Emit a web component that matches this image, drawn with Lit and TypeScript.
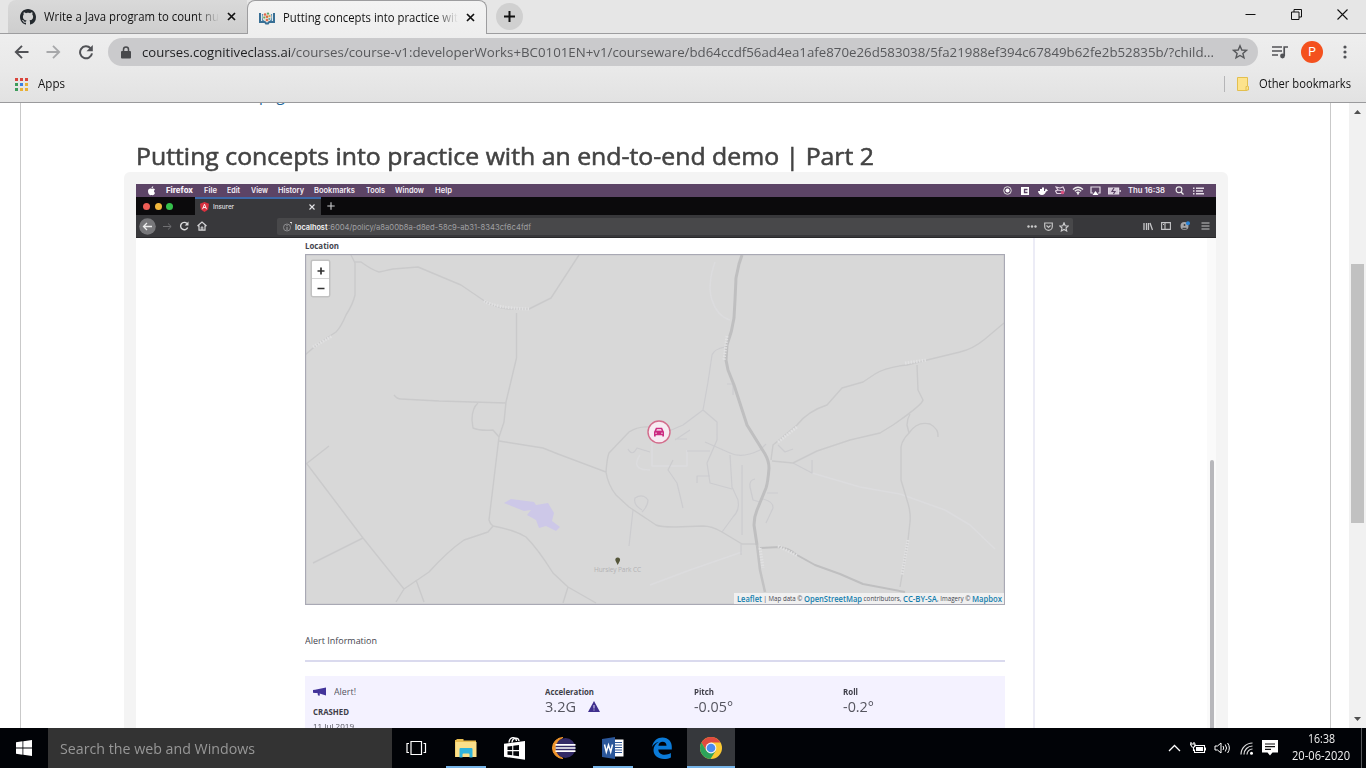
import { LitElement, html, css, svg } from "lit";
import { customElement, property } from "lit/decorators.js";

/** Text scaled horizontally to a given width, so labels keep their measure in any font. */
@customElement("fit-text")
class FitText extends LitElement {
  @property({ type: Number }) w = 0;
  static styles = css`
    :host { display: inline-block; flex: none; white-space: pre; }
    .t { display: inline-block; transform-origin: 0 50%; }
  `;
  render() {
    return html`<span class="t"><slot></slot></span>`;
  }
  firstUpdated() {
    const t = this.renderRoot.querySelector(".t") as HTMLElement;
    const natural = t.getBoundingClientRect().width;
    this.style.width = `${this.w}px`;
    if (natural > 0) t.style.transform = `scaleX(${this.w / natural})`;
  }
}

const closeX = html`<svg class="cx" width="9" height="9" viewBox="0 0 9 9"><path d="M1 1l7 7M8 1l-7 7" stroke="#111" stroke-width="1.700" fill="none"/></svg>`;

@customElement("browser-top")
class BrowserTop extends LitElement {
  static styles = css`
    :host { display: block; font: 12px/16px "Open Sans", sans-serif; color: #111; }
    svg { display: block; flex: none; }
    .strip { background: #e6e6e6; border-bottom: 1px solid #9d9d9f; display: flex; box-sizing: border-box; height: 34px; padding-left: 8px; }
    .tab { box-sizing: border-box; height: 33px; display: flex; align-items: center; padding-left: 12px; }
    .tab .gh { margin-right: 8px; }
    .tab .cc { margin-right: 8px; }
    .old { width: 239px; background: linear-gradient(#d9d9d9, #cecece); border-radius: 8px 0 0 0; }
    .cur { width: 240px; height: 34px; background: linear-gradient(#f3f3f3, #eeeeee); border: 1px solid #9d9d9f; border-bottom: 0; border-radius: 8px 8px 0 0; padding-left: 11px; }
    .fade { display: flex; -webkit-mask-image: linear-gradient(90deg, #000 87%, transparent 100%); mask-image: linear-gradient(90deg, #000 87%, transparent 100%); }
    .cx { margin-left: 8px; }
    .plus { width: 27px; height: 27px; border-radius: 50%; background: #d0d0d0; margin: 3px 0 0 9px; display: flex; align-items: center; justify-content: center; }
    .wins { margin-left: auto; display: flex; padding-top: 9px; padding-right: 18px; gap: 35px; }
    .bar { height: 36px; background: linear-gradient(#eeeeee, #e9e9e9); display: flex; align-items: center; padding-left: 14px; }
    .nav { display: flex; gap: 15px; margin-right: 12px; }
    .omni { width: 1150px; box-sizing: border-box; height: 28px; border-radius: 14px; background: #cacacc; display: flex; align-items: center; padding: 0 10px 0 13px; font-size: 13.4px; line-height: 18px; color: #57585b; }
    .omni .lock { margin-right: 11px; }
    .dom { color: #1d1e20; }
    .omni .star { margin-left: auto; }
    .av { width: 22px; height: 22px; border-radius: 50%; background: #f4511e; color: #fff; font: 12px/22px Roboto, sans-serif; text-align: center; margin: 0 20px 0 12px; }
    .media { margin-left: 14px; }
    .marks { background: linear-gradient(#e9e9e9, #e2e2e2); border-bottom: 1px solid #9a9a9c; display: flex; align-items: center; padding: 0 15px 4px 15px; box-sizing: border-box; height: 33px; }
    .marks .apps { margin-right: 10px; }
    .div { width: 1px; height: 16px; background: #b5b5b7; margin-left: auto; margin-right: 12px; }
    .fold { margin-right: 10px; }
  `;
  render() {
    return html`
      <div class="strip">
        <div class="tab old">
          <svg class="gh" width="16" height="16" viewBox="0 0 16 16"><path fill="#24292e" d="M8 0C3.58 0 0 3.58 0 8c0 3.54 2.29 6.53 5.47 7.59.4.07.55-.17.55-.38 0-.19-.01-.82-.01-1.49-2.01.37-2.53-.49-2.69-.94-.09-.23-.48-.94-.82-1.13-.28-.15-.68-.52-.01-.53.63-.01 1.08.58 1.23.82.72 1.21 1.87.87 2.33.66.07-.52.28-.87.51-1.07-1.78-.2-3.64-.89-3.64-3.95 0-.87.31-1.59.82-2.15-.08-.2-.36-1.02.08-2.12 0 0 .67-.21 2.2.82.64-.18 1.32-.27 2-.27s1.36.09 2 .27c1.53-1.04 2.2-.82 2.2-.82.44 1.1.16 1.92.08 2.12.51.56.82 1.27.82 2.15 0 3.07-1.87 3.75-3.65 3.95.29.25.54.73.54 1.48 0 1.07-.01 1.93-.01 2.2 0 .21.15.46.55.38A8.01 8.01 0 0016 8c0-4.42-3.58-8-8-8z"/></svg>
          <span class="fade"><fit-text w="175">Write a Java program to count nu</fit-text></span>
          ${closeX}
        </div>
        <div class="tab cur">
          <svg class="cc" width="16" height="14" viewBox="0 0 16 14"><path d="M1 2v9h5l1 1.500h2l1-1.500h5V2" fill="none" stroke="#386f95" stroke-width="2"/><path d="M3.500 3v6.500H6" fill="none" stroke="#5a93b5" stroke-width="1.200"/><path d="M12.500 3v6.500H10" fill="none" stroke="#5a93b5" stroke-width="1.200"/><circle cx="8" cy="6" r="4.500" fill="#e4e0d8"/><circle cx="6" cy="3.500" r="1.200" fill="#e2664a"/><circle cx="9" cy="2.600" r="1.100" fill="#5aa66a"/><circle cx="10.500" cy="5" r="1.100" fill="#e0a040"/><circle cx="5.300" cy="6.500" r="1.100" fill="#65ab5e"/><circle cx="8" cy="5.700" r="1.300" fill="#d96c3f"/><circle cx="8" cy="9" r="1.300" fill="#df6f50"/><circle cx="10.300" cy="8" r="1" fill="#5aa6a0"/></svg>
          <span class="fade"><fit-text w="175">Putting concepts into practice wit</fit-text></span>
          ${closeX}
        </div>
        <div class="plus"><svg width="13" height="13" viewBox="0 0 13 13"><path d="M6.500 1v11M1 6.500h11" stroke="#111" stroke-width="2"/></svg></div>
        <div class="wins">
          <svg width="11" height="11" viewBox="0 0 11 11"><path d="M.500 5.500h10" stroke="#111"/></svg>
          <svg width="11" height="11" viewBox="0 0 11 11"><path d="M.500 3h7.500v7.500H.500zM3 3V.500h7.500V8H8" fill="none" stroke="#111"/></svg>
          <svg width="11" height="11" viewBox="0 0 11 11"><path d="M.500.500l10 10M10.500.500l-10 10" stroke="#111" stroke-width="1.100"/></svg>
        </div>
      </div>
      <div class="bar">
        <div class="nav">
          <svg width="16" height="16" viewBox="0 0 16 16"><path d="M14.500 8H2M8 1.800L1.800 8 8 14.200" fill="none" stroke="#515256" stroke-width="1.900"/></svg>
          <svg width="16" height="16" viewBox="0 0 16 16"><path d="M1.500 8H14M8 1.800L14.200 8 8 14.200" fill="none" stroke="#a7a8aa" stroke-width="1.800"/></svg>
          <svg width="20" height="16" viewBox="0 0 20 16"><path d="M14.500 4.200A6 6 0 1 0 16 9.300" fill="none" stroke="#515256" stroke-width="2"/><path d="M16.800 1v6.300h-6.300z" fill="#515256"/></svg>
        </div>
        <div class="omni">
          <svg class="lock" width="10" height="13" viewBox="0 0 10 13"><path d="M1 5h8a1 1 0 011 1v5.500a1 1 0 01-1 1H1a1 1 0 01-1-1V6a1 1 0 011-1z" fill="#48494c"/><path d="M2.500 5V3.400a2.500 2.500 0 015 0V5" fill="none" stroke="#48494c" stroke-width="1.500"/></svg>
          <fit-text class="dom" w="149">courses.cognitiveclass.ai</fit-text><fit-text w="923">/courses/course-v1:developerWorks+BC0101EN+v1/courseware/bd64ccdf56ad4ea1afe870e26d583038/5fa21988ef394c67849b62fe2b52835b/?child...</fit-text>
          <svg class="star" width="16" height="16" viewBox="0 0 16 16"><path d="M8 1.800l1.800 4.200 4.600.4-3.500 3 1.100 4.500L8 11.500l-4 2.400 1.100-4.500-3.500-3 4.600-.4z" fill="none" stroke="#57585b" stroke-width="1.400"/></svg>
        </div>
        <svg class="media" width="17" height="14" viewBox="0 0 17 14"><path d="M0 2h10M0 6h10M0 10h6" stroke="#515256" stroke-width="1.700"/><circle cx="10.500" cy="11" r="2.400" fill="#515256"/><path d="M12.200 11V2H16" fill="none" stroke="#515256" stroke-width="1.700"/></svg>
        <div class="av">P</div>
        <svg width="4" height="14" viewBox="0 0 4 14" fill="#515256"><circle cx="2" cy="2" r="1.600"/><circle cx="2" cy="7" r="1.600"/><circle cx="2" cy="12" r="1.600"/></svg>
      </div>
      <div class="marks">
        <svg class="apps" width="13" height="13" viewBox="0 0 13 13"><path d="M0 0h3v3H0zM5 0h3v3H5zM10 0h3v3h-3z" fill="#d9453c"/><path d="M0 5h3v3H0zM0 10h3v3H0z" fill="#3d9c5b"/><path d="M5 5h3v3H5z" fill="#3c7fe0"/><path d="M10 5h3v3h-3zM5 10h3v3H5zM10 10h3v3h-3z" fill="#e9b035"/></svg>
        <fit-text w="27">Apps</fit-text>
        <div class="div"></div>
        <svg class="fold" width="12" height="14" viewBox="0 0 12 14"><path d="M.500.500h10V9l1 .500v3.500h-1.500v.500H.500z" fill="#fde38c" stroke="#e3bf4e"/><path d="M9 13V9.500h1.500" stroke="#e3bf4e" fill="none"/></svg>
        <fit-text w="92">Other bookmarks</fit-text>
      </div>`;
  }
}

const thin = [
  "M351 255L355 263V295Q353 304 346 315 341 327 336 332L319 343 305 355",
  "M355 262H361Q372 270 379 272 384 271 393 269L418 267 461 285 486 302Q495 308 509 309H529L551 298 579 255",
  "M516.500 313V358L506 402 504 422 499 437 489 520Q490 524 493 526",
  "M394 395Q397 399 401 399L439 401 506 403",
  "M478 403Q472 408 472 420L473 428Q480 431 493 430L499 437",
  "M499 441L543 448 558 454 606 472Q608 485 616 495L629 507 656 525Q660 527 675 527L703 526Q712 526 722 532L742 544H757",
  "M606 472Q607 458 609 453L629 432Q638 426 650 427",
  "M493 526L488 532 464 540Q448 551 429 572L404 589 396 602",
  "M493 526Q515 530 526 537 538 549 553 573L568 587 596 603M568 587L563 603",
  "M307 464L363 538 404 589M329 446L306 464M363 538L313 563M416 580L424 602",
  "M1004 323L985 339Q973 349 960 352L927 360 907 365Q886 367 875 374L863 382 842 388 827 405Q808 411 797 425L773 445 771 460",
  "M917 365L918 390 923 400Q922 405 893 425L880 433 850 440 817 451 793 463 772 461",
  "M910 414Q907 419 907 425L909 433Q902 440 901 447V480L907 500Q911 512 910 522L908 540 900 587",
  "M909 433Q917 421 930 424 939 429 938 437",
];
const faint = [
  "M725 347Q714 349 712 355L708 382 703 410 683 425 662 434M703 410L717 422 717 440 707 463 710 483 732 489",
  "M705 442L730 453Q742 459 760 450L766 444M730 455L732 487 738 500Q740 510 733 517L722 532",
  "M687 451H710M697 483V476H710M673 460L668 470 677 483 683 508M675 440L690 430 M675 439H687",
  "M755 479Q749 480 750 487L753 500 760 502M763 499Q774 502 773 508L766 523M767 493H778",
  "M793 463L812 473V460M778 445L785 452 793 449M727 384H733V395M741 544V555M742 465V535",
  "M633 510L629 546M642 510Q633 505 635 498 643 493 648 500 648 506 642 512M628 449Q632 457 637 448L650 452",
];
const pale = [
  "M812 473L860 487 900 494 945 510 970 525 995 549", "M715 262Q707 285 712 300 717 316 730 320", "M650 585L690 570 742 552",
  "M652 440V466H687V450M640 455Q630 470 650 470",
];

@customElement("demo-video")
class DemoVideo extends LitElement {
  static styles = css`
    :host { display: block; width: 1080px; height: 547px; background: #fff; overflow: hidden; font-family: "Open Sans", sans-serif; color: #44444e; }
    svg { display: block; flex: none; }
    .soft { filter: blur(0.55px); }
    .menu { height: 13px; background: #5c4466; display: flex; align-items: center; padding: 0 11px 0 11px; gap: 10.400px; font: 600 7.6px/12px Inter, sans-serif; color: #f6f0f8; }
    .menu .b { font-weight: 800; }
    .right { margin-left: auto; display: flex; align-items: center; gap: 6.900px; }
    .tabs { height: 18px; background: #0b0a0c; display: flex; align-items: center; }
    .lights { width: 59px; box-sizing: border-box; padding-left: 7px; display: flex; gap: 4.500px; }
    .lights i { width: 7px; height: 7px; border-radius: 50%; background: #ee5d55; }
    .lights i:nth-child(2) { background: #f0b63c; }
    .lights i:nth-child(3) { background: #35c04c; }
    .t { width: 126px; height: 19px; box-sizing: border-box; background: #38383b; border-top: 2px solid #3d68a8; display: flex; align-items: center; padding: 0 6px 0 5px; gap: 4px; font: 500 6.5px/10px Inter, sans-serif; color: #e0e0e3; }
    .t .x { margin-left: auto; }
    .pl { margin-left: 6px; }
    .tool { height: 23px; background: #38383b; display: flex; align-items: center; padding-left: 3px; box-sizing: border-box; border-bottom: 1px solid #29292b; }
    .ics { display: flex; align-items: center; gap: 6.900px; width: 138px; }
    .field { width: 796px; height: 17px; box-sizing: border-box; background: #48484a; border-radius: 2px; display: flex; align-items: center; padding: 1px 4px 0 6px; font: 7.8px/12px Inter, sans-serif; color: #a0a0a3; }
    .field .h { color: #f4f4f5; font-weight: 600; margin-left: 3px; }
    .fr { margin-left: auto; display: flex; align-items: center; gap: 6.500px; }
    .end { margin-left: auto; display: flex; align-items: center; gap: 8.500px; padding-right: 3px; }
    .doc { display: grid; grid-template-columns: 899px 172px 9px; height: 493px; background: #fff; }
    .col { border-right: 2px solid #ececf6; padding-left: 169px; box-sizing: border-box; }
    .sb { background: #fafafa; padding: 222px 2px 0 3px; }
    .sb i { display: block; height: 300px; background: #b7b7bb; border-radius: 2px; }
    .loc { font-size: 8px; line-height: 15px; font-weight: 700; height: 16px; display: flex; }
    .map { position: relative; width: 700px; height: 351px; }
    .zoom { position: absolute; left: 7px; top: 7px; width: 17px; height: 35px; background: #fff; box-shadow: 0 0 0 1.500px #c2c2c2; border-radius: 1px; }
    .attr { position: absolute; right: 1px; bottom: 1px; height: 11px; width: 270px; background: #f0f0f0; font-size: 6.6px; line-height: 11px; display: flex; align-items: center; justify-content: center; }
    .attr .l { color: #167fae; font-size: 8px; font-weight: 600; }
    .ai { font-size: 9px; line-height: 12px; padding-top: 30px; height: 25px; display: flex; }
    .hr { width: 700px; height: 1.500px; background: #dadaee; }
    .panel { width: 700px; height: 60px; margin-top: 14px; background: #f4f2ff; display: grid; grid-template-columns: 232px 149px 149px 1fr; padding: 9px 8px; box-sizing: border-box; color: #55555f; }
    .al { display: flex; align-items: center; gap: 7px; font-size: 9.500px; line-height: 13px; }
    .cr { font-size: 8px; line-height: 12px; font-weight: 700; color: #3f3f49; margin-top: 8px; display: flex; }
    .dt { font-size: 8px; line-height: 12px; margin-top: 2px; display: flex; }
    .k { font-size: 8px; line-height: 13px; font-weight: 700; color: #3f3f49; display: flex; }
    .v { font-size: 15px; line-height: 17px; display: flex; align-items: center; gap: 12px; }
  `;
  render() {
    return html`
      <div class="soft">
      <div class="menu">
        <svg width="9" height="10" viewBox="0 0 9 10"><path d="M4.500 3C3 2 1 3 1 5.300S2.600 9.500 3.400 9.200c.8-.3 1.300-.3 2.100 0S8 8 8 6.800C6.700 6.200 6.700 4.200 8 3.500 7 2.200 5.500 2.500 4.500 3zM4.500 2.500C4.400 1.300 5.200.4 6.200.3 6.300 1.400 5.500 2.400 4.500 2.500z" fill="#fff"/></svg>
        <fit-text class="b" w="27">Firefox</fit-text><fit-text w="13">File</fit-text><fit-text w="13">Edit</fit-text><fit-text w="17">View</fit-text><fit-text w="26">History</fit-text><fit-text w="41">Bookmarks</fit-text><fit-text w="19">Tools</fit-text><fit-text w="29">Window</fit-text><fit-text w="17">Help</fit-text>
        <div class="right">
          <svg width="9" height="9" viewBox="0 0 9 9"><circle cx="4.500" cy="4.500" r="3.800" fill="none" stroke="#ddd"/><circle cx="4.500" cy="4.500" r="2" fill="#fff"/></svg>
          <svg width="12" height="8" viewBox="0 0 12 8"><path d="M2 0h8v8H2z" fill="#fff"/><path d="M8.500 2.500H5.500v3h3" fill="none" stroke="#5c4466" stroke-width="1.300"/></svg>
          <svg width="10" height="8" viewBox="0 0 10 8"><path d="M0 4h7q0-2 1-2.500Q9 3 10 3.200 9 4.500 8 4.600 7 8 4 8 .500 8 0 4zM2 2h4v2H2zM4 .500h2V2H4z" fill="#fff"/></svg>
          <svg width="10" height="9" viewBox="0 0 10 9"><path d="M1 1l4 1 3-1 1.500 3L8 7.500H2L.500 5 3 4zM3 4l5 1" fill="none" stroke="#e5d5e5" stroke-width="1.200"/><circle cx="7.500" cy="6.500" r="1.800" fill="#d84f7f"/></svg>
          <svg width="12" height="9" viewBox="0 0 12 9"><path d="M1 3.500Q6-1 11 3.500M2.800 5.200Q6 2.500 9.200 5.200M4.500 6.800Q6 5.500 7.500 6.800" fill="none" stroke="#eee" stroke-width="1.400"/><circle cx="6" cy="7.800" r="1" fill="#eee"/></svg>
          <svg width="11" height="9" viewBox="0 0 11 9"><path d="M3 7H1V1h9v6H8" fill="none" stroke="#e5dde8" stroke-width="1.200"/><path d="M5.500 5L8.500 9h-6z" fill="#fff"/></svg>
          <svg width="13" height="8" viewBox="0 0 13 8"><path d="M.600 1h10v6h-10zM12.200 3v2" fill="#d5c9d9" stroke="#e5dde8" stroke-width="1.200"/><path d="M6 1L4 4.500h3L5.500 7" fill="none" stroke="#5c4466" stroke-width="1.200"/></svg>
          <fit-text w="37">Thu 16:38</fit-text>
          <svg width="14" height="9" viewBox="0 0 14 9"><circle cx="7" cy="3.800" r="2.900" fill="none" stroke="#eee" stroke-width="1.100"/><path d="M9 6l2.500 2.500" stroke="#eee" stroke-width="1.200"/></svg>
          <svg width="12" height="8" viewBox="0 0 12 8"><path d="M0 1.200h1.500M3 1.200h8M0 4h1.500M3 4h7M0 6.800h1.500M3 6.800h8" stroke="#e5dde8" stroke-width="1.500"/></svg>
        </div>
      </div>
      <div class="tabs">
        <div class="lights"><i></i><i></i><i></i></div>
        <div class="t">
          <svg width="9" height="10" viewBox="0 0 9 10"><path d="M4.500 0L9 1.700 8.200 7.500 4.500 10 .800 7.500 0 1.700z" fill="#d9303e"/><path d="M2.500 7.200l2-5 2 5M3.200 5.500h2.600" fill="none" stroke="#fff" stroke-width=".9"/></svg>
          <fit-text w="21">Insurer</fit-text>
          <svg class="x" width="6" height="6" viewBox="0 0 6 6"><path d="M.500.500l5 5M5.500.500l-5 5" stroke="#e5e5e8" stroke-width="1.100"/></svg>
        </div>
        <svg class="pl" width="8" height="8" viewBox="0 0 8 8"><path d="M4 .300v7.400M.300 4h7.400" stroke="#cfcfd1" stroke-width="1.100"/></svg>
      </div>
      <div class="tool">
        <div class="ics">
          <svg width="17" height="17" viewBox="0 0 17 17"><circle cx="8.500" cy="8.500" r="8.300" fill="#77777a"/><path d="M13 8.500H4.500M8 5L4.500 8.500 8 12" fill="none" stroke="#ececec" stroke-width="1.300"/></svg>
          <svg width="9" height="9" viewBox="0 0 9 9"><path d="M0 4.500h8M5 1.500l3.200 3L5 7.500" fill="none" stroke="#6f6f72"/></svg>
          <svg width="11" height="10" viewBox="0 0 11 10"><path d="M8 2.500A3.700 3.700 0 1 0 8.700 6.500" fill="none" stroke="#dadadc" stroke-width="1.400"/><path d="M9.500.500v4H5.700z" fill="#dadadc"/></svg>
          <svg width="10" height="10" viewBox="0 0 10 10"><path d="M.500 5L5 1l4.500 4M2 4.500v4.700h6V4.500" fill="none" stroke="#d5d5d7" stroke-width="1.200"/><path d="M4.200 9V6h1.600v3" fill="none" stroke="#d5d5d7"/></svg>
        </div>
        <div class="field">
          <svg width="9" height="10" viewBox="0 0 9 10"><circle cx="4" cy="5.500" r="3.500" fill="none" stroke="#8c8c8f"/><path d="M4 4.800V8M4 3v1" stroke="#9d9d9f"/><path d="M7 .500h2v2" stroke="#ddd" fill="none"/></svg>
          <fit-text class="h" w="32.500">localhost</fit-text><fit-text w="203">:6004/policy/a8a00b8a-d8ed-58c9-ab31-8343cf6c4fdf</fit-text>
          <div class="fr">
            <svg width="10" height="3" viewBox="0 0 10 3" fill="#ccc"><circle cx="1.500" cy="1.500" r="1.200"/><circle cx="5" cy="1.500" r="1.200"/><circle cx="8.500" cy="1.500" r="1.200"/></svg>
            <svg width="9" height="9" viewBox="0 0 9 9"><path d="M.700 1h7.600v3.500a3.800 3.800 0 01-7.600 0zM2.500 3.500l2 2 2-2" fill="none" stroke="#c5c5c5" stroke-width="1.200"/></svg>
            <svg width="10" height="10" viewBox="0 0 10 10"><path d="M5 .800l1.200 2.900 3 .300L7 6l.7 3L5 7.500 2.300 9 3 6 .800 4l3-.3z" fill="none" stroke="#ceced0" stroke-width="1.100"/></svg>
          </div>
        </div>
        <div class="end">
          <svg width="10" height="9" viewBox="0 0 10 9"><path d="M1 1v7M3.500 1v7M5.500 1v7M7 1l2.500 7" stroke="#c5c5c7" stroke-width="1.300"/></svg>
          <svg width="10" height="8" viewBox="0 0 10 8"><path d="M.600.600h8.800v6.800H.600zM4 .600v6.800M2 2.500h1" fill="none" stroke="#c5c5c7" stroke-width="1.100"/></svg>
          <svg width="10" height="10" viewBox="0 0 10 10"><circle cx="4.500" cy="5" r="4" fill="#a5a5a8"/><path d="M2.500 7.500h4M4.500 3v2" stroke="#444" stroke-width="1.500"/><circle cx="8" cy="2.200" r="2" fill="#2a84d8"/></svg>
          <svg width="15" height="8" viewBox="0 0 15 8"><path d="M3.500 1h8M3.500 4h8M3.500 7h8" stroke="#c5c5c7" stroke-width="1.200"/></svg>
        </div>
      </div>
      <div class="doc">
        <div class="col">
          <div class="loc"><fit-text w="34">Location</fit-text></div>
          <div class="map">
            <svg width="700" height="351" viewBox="305 254 700 351">
              <rect x="305" y="254" width="700" height="351" fill="#d8d8d8"/>
              <g fill="none" stroke-linejoin="round">
                ${pale.map((d) => svg`<path d=${d} stroke="#dcdcde" stroke-width="1.500"/>`)}
                ${faint.map((d) => svg`<path d=${d} stroke="#cccccf" stroke-width="1.200"/>`)}
                ${thin.map((d) => svg`<path d=${d} stroke="#cacacb" stroke-width="1.400"/>`)}
                <path d="M742 255L739 264 736 278 735 300 734 318Q732 332 727 345L726 360 728 370 734 385 747 425 765 454Q769 461 769 468 768 482 766 488L757 510Q754 517 754 525L757 545" stroke="#bfbfc0" stroke-width="3"/>
                <path d="M757 545L760 570 765 592" stroke="#c2c2c3" stroke-width="2.500"/>
                <path d="M760 548L780 547Q788 548 797 555L815 565 840 574 863 584 905 592" stroke="#bfbfc0" stroke-width="2"/>
                <g stroke="#e1e1e2" stroke-width="3" stroke-dasharray="1.500 1.300">
                  <path d="M313 347L332 336"/><path d="M484 301Q495 308 529 309"/><path d="M727 336L724 360"/><path d="M905 363L927 360"/><path d="M778 442L797 427"/><path d="M908 540L902 575"/><path d="M778 546L798 556"/><path d="M760 548L763 568"/>
                </g>
              </g>
              <path d="M504 503L511 499 534 502 536 505 548 503 554 513 552 521 560 527 556 531 546 526 539 528 536 520 527 515 531 510 524 511z" fill="#cdc8e8"/>
              <path d="M617.700 565L615.600 561a2.400 2.400 0 1 1 4.200 0z" fill="#55563a"/>
              <text x="594" y="572" font-size="6.500" textLength="47" fill="#b2b2b4">Hursley Park CC</text>
              <circle cx="659" cy="432" r="11" fill="#f7ebf2" stroke="#d36d8c" stroke-width="1.400"/>
              <path d="M654.500 431l1.400-3.200h6.200l1.400 3.200.500.800v4.700h-1.700v-1.200h-6.600v1.200h-1.700v-4.700z" fill="#cb2b81"/><path d="M656.200 430.800l.8-1.700h4l.8 1.700z" fill="#f0c5dc"/><path d="M655.300 433.200h1.500M661.200 433.200h1.500" stroke="#f7ebf2"/>
              <rect x="305.500" y="254.500" width="699" height="350" fill="none" stroke="#a9a9b4" stroke-width="1.300"/>
            </svg>
            <div class="zoom"><svg width="17" height="35" viewBox="0 0 17 35"><path d="M0 17.500h17" stroke="#d5d5d5"/><path d="M9 6.500v7M5.500 10h7M5.500 27.500h7" stroke="#333" stroke-width="1.700"/></svg></div>
            <div class="attr"><fit-text class="l" w="25">Leaflet</fit-text><fit-text w="42"> | Map data © </fit-text><fit-text class="l" w="58">OpenStreetMap</fit-text><fit-text w="41"> contributors, </fit-text><fit-text class="l" w="34">CC-BY-SA</fit-text><fit-text w="35">, Imagery © </fit-text><fit-text class="l" w="30">Mapbox</fit-text></div>
          </div>
          <div class="ai"><fit-text w="72">Alert Information</fit-text></div>
          <div class="hr"></div>
          <div class="panel">
            <div>
              <div class="al"><svg width="14" height="9" viewBox="0 0 14 9"><path d="M0 3l2-.300V6L0 5.700zM2 2.700L13 .500v8L6.500 6.500 7 8.500H5L4.500 6 2 6z" fill="#43349a"/></svg><fit-text w="22">Alert!</fit-text></div>
              <div class="cr"><fit-text w="36">CRASHED</fit-text></div>
              <div class="dt"><fit-text w="41">11 Jul 2019</fit-text></div>
            </div>
            <div><div class="k"><fit-text w="49">Acceleration</fit-text></div><div class="v"><fit-text w="31">3.2G</fit-text><svg width="12" height="11" viewBox="0 0 12 11"><path d="M6 0l6 11H0z" fill="#3f2f8d"/><path d="M6 4v3.500M6 8.500v1" stroke="#c5bfe5" stroke-width="1.200"/></svg></div></div>
            <div><div class="k"><fit-text w="20">Pitch</fit-text></div><div class="v"><fit-text w="39">-0.05°</fit-text></div></div>
            <div><div class="k"><fit-text w="15">Roll</fit-text></div><div class="v"><fit-text w="31">-0.2°</fit-text></div></div>
          </div>
        </div>
        <div></div>
        <div class="sb"><i></i></div>
      </div>
      </div>`;
  }
}

@customElement("task-bar")
class TaskBar extends LitElement {
  static styles = css`
    :host { display: flex; height: 40px; background: #010307; font-family: "Open Sans", sans-serif; color: #f2f2f2; }
    svg { display: block; flex: none; }
    .start { width: 48px; display: flex; align-items: center; justify-content: center; }
    .search { width: 344px; background: #333; box-sizing: border-box; padding-left: 12px; display: flex; align-items: center; font-size: 14.600px; line-height: 20px; color: #979797; }
    .apps { display: flex; }
    .a { width: 49.150px; display: flex; flex-direction: column; align-items: center; }
    .a svg { margin: 8px 0 6px; }
    .u { width: 40px; height: 2px; background: #76b4e8; }
    .on { width: 48px; background: #36383c; }
    .on .u { width: 48px; }
    .tray { margin-left: auto; display: flex; align-items: center; gap: 8.500px; margin-right: 14px; }
    .clock { width: 58px; display: flex; flex-direction: column; align-items: center; font-size: 12px; line-height: 17px; padding-top: 2px; }
    .peek { width: 1px; background: #55575b; margin: 0 4px 0 11px; }
  `;
  render() {
    return html`
      <div class="start"><svg width="16" height="16" viewBox="0 0 16 16"><path d="M0 2.200L6.500 1.300V7.600H0zM7.300 1.200L16 0v7.600H7.300zM0 8.400h6.500v6.300L0 13.800zM7.300 8.400H16V16l-8.700-1.200z" fill="#fff"/></svg></div>
      <div class="search"><fit-text w="195">Search the web and Windows</fit-text></div>
      <div class="apps">
        <div class="a"><svg width="24" height="24" viewBox="0 0 24 24"><path d="M6 5.500h10.500v13H6zM4 7.500H2v9h2M18.500 7.500h2v9h-2" fill="none" stroke="#fff" stroke-width="1.200"/></svg></div>
        <div class="a"><svg width="24" height="24" viewBox="0 0 24 24"><path d="M1 4h1.500V3h7v1.500H22V21H1z" fill="#e9bd50"/><path d="M1.500 6H22.500v15h-21z" fill="#fbe08a"/><path d="M5.500 21.500v-8.500q0-1 1-1h11q1 0 1 1v8.500h-3v-3q0-1-1-1h-5q-1 0-1 1v3z" fill="#2fb4dc"/></svg><span class="u"></span></div>
        <div class="a"><svg width="24" height="24" viewBox="0 0 24 24"><path d="M6 6.500C6.500.500 13 0 13.500 5M9 6.500C9.500 1.500 15.500.500 16 5" fill="none" stroke="#fff" stroke-width="1.400"/><path d="M1 7.800L22 5v18.800L1 20.800z" fill="#fff"/><path d="M4.500 10.500l4.700-.6v4.200H4.500zM10.300 9.800l5.700-.8v5.100h-5.700zM4.500 15.200h4.700v4.100l-4.700-.6zM10.300 15.200H16v5l-5.700-.800z" fill="#05070b"/></svg></div>
        <div class="a"><svg width="24" height="24" viewBox="0 0 24 24"><path d="M11 1.500A10.500 10.500 0 0 0 11 22.500 11.500 11.500 0 0 1 11 1.500z" fill="#f0952c" stroke="#f0952c"/><circle cx="13.500" cy="12" r="10" fill="#332a66"/><path d="M3.500 8.800h20M3.500 12h20M3.500 15.200h20" stroke="#fff" stroke-width="1.700"/></svg></div>
        <div class="a"><svg width="24" height="24" viewBox="0 0 24 24"><path d="M12 3.500h10.500v17H12z" fill="#fff"/><path d="M13 6.500h8M13 9h8M13 11.500h8M13 14h8M13 16.500h8" stroke="#2c5595"/><path d="M1 3l13-2v22L1 21z" fill="#2b579a"/><path d="M3.500 8.500L5.300 16 7.500 9 9.700 16l1.800-7.500" fill="none" stroke="#fff" stroke-width="1.500"/></svg><span class="u"></span></div>
        <div class="a"><svg width="24" height="24" viewBox="0 0 24 24"><path d="M2 11C3.300 4.500 7.500 1.500 12.500 1.500c6 0 9.300 4.500 9.300 9.300v2.700H8.300c.2 3.800 3.200 5.200 6.300 5.200 2.500 0 4.500-.6 6.300-1.700v4.500C19 22.500 16.500 23 14 23 8 23 3.500 19.500 3.500 14c0-3.700 2-6.600 5.500-8.300C5.800 6.500 3.500 8.500 2 11zM8.400 9.800h8.100c0-2.600-1.600-4-3.900-4-2.200 0-3.900 1.500-4.200 4z" fill="#0b7bd8"/></svg></div>
        <div class="a on"><svg width="24" height="24" viewBox="0 0 24 24"><circle cx="12" cy="12" r="11" fill="#fbc933"/><path d="M12 6.500H21.500A11 11 0 0 0 2.500 6.500L7.300 14.700z" fill="#e04a3f"/><path d="M2.470 6.500A11 11 0 0 0 11.500 23L16.700 14.700 12 17 7.300 14.700z" fill="#2da25a"/><circle cx="12" cy="12" r="5.400" fill="#f4f4f4"/><circle cx="12" cy="12" r="4.300" fill="#4b8bf0"/></svg><span class="u"></span></div>
      </div>
      <div class="tray">
        <svg width="13" height="8" viewBox="0 0 13 8"><path d="M1 7l5.500-5.500L12 7" fill="none" stroke="#fff" stroke-width="1.300"/></svg>
        <svg width="16" height="12" viewBox="0 0 16 12"><path d="M4.500 3.500h10v7h-10v-3M15.500 5.500v3" fill="none" stroke="#fff" stroke-width="1.100"/><path d="M6 5h7v4H6z" fill="#fff"/><path d="M1 0v2M4 0v2M0 2h5v2L3.500 5.500V9M.5 2.500L2.500 5.500" fill="none" stroke="#fff" stroke-width="1.100"/></svg>
        <svg width="17" height="14" viewBox="0 0 17 14"><path d="M1 5h2.500L7 2v10L3.500 9H1z" fill="none" stroke="#fff"/><path d="M9 5q1.500 2 0 4M11.300 3.500q2.500 3.500 0 7M13.600 2q3.500 5 0 10" fill="none" stroke="#fff"/></svg>
        <svg width="14" height="13" viewBox="0 0 14 13"><path d="M1 12.500A11.500 11.500 0 0 1 12.500 1M4 12.500A8.500 8.500 0 0 1 12.500 4M7 12.500A5.500 5.500 0 0 1 12.500 7" fill="none" stroke="#ddd" stroke-width="1.200"/><circle cx="11.500" cy="11.300" r="1.500" fill="#fff"/></svg>
        <svg width="16" height="16" viewBox="0 0 16 16"><path d="M0 0h16v12.500h-5.500L8 15.500l-2.500-3H0z" fill="#fff"/><path d="M3 4h10M3 6.700h10M3 9.400h6" stroke="#111" stroke-width="1.200"/></svg>
      </div>
      <div class="clock"><fit-text w="27">16:38</fit-text><fit-text w="58">20-06-2020</fit-text></div>
      <div class="peek"></div>`;
  }
}

@customElement("app-root")
class AppRoot extends LitElement {
  static styles = css`
    :host { display: flex; flex-direction: column; width: 1366px; height: 768px; overflow: hidden; background: #fff; font-family: "Open Sans", sans-serif; }
    .view { flex: 1; min-height: 0; display: flex; overflow: hidden; }
    .sheet { box-sizing: border-box; margin-left: 20px; width: 1311px; border: solid #c9c9c9; border-width: 0 1px; overflow: hidden; }
    .link { font-size: 15px; line-height: 22px; color: #1a6499; padding-left: 238px; margin-top: -19px; height: 22px; }
    h2 { margin: 33px 0 0 115px; height: 33px; font-size: 24px; line-height: 34px; font-weight: 400; -webkit-text-stroke: 0.55px #434343; color: #434343; display: flex; }
    .frame { margin-left: 103px; width: 1080px; padding: 12px 12px 0; background: #f4f4f4; border-radius: 6px 6px 0 0; }
    .scroll { margin-left: auto; width: 17px; background: #f1f1f1; display: flex; flex-direction: column; align-items: center; }
    .thumb { width: 13px; height: 259px; background: #c1c1c1; margin-top: 150px; }
    .scroll svg { display: block; margin-top: 7px; }
    .scroll .dn { margin-top: auto; margin-bottom: 7px; }
  `;
  render() {
    return html`
      <browser-top></browser-top>
      <div class="view">
        <div class="sheet">
          <div class="link">page</div>
          <h2><fit-text w="738">Putting concepts into practice with an end-to-end demo | Part 2</fit-text></h2>
          <div class="frame"><demo-video></demo-video></div>
        </div>
        <div class="scroll">
          <svg width="7" height="4" viewBox="0 0 7 4"><path d="M3.500 0L7 4H0z" fill="#505050"/></svg>
          <div class="thumb"></div>
          <svg class="dn" width="7" height="4" viewBox="0 0 7 4"><path d="M3.500 4L7 0H0z" fill="#505050"/></svg>
        </div>
      </div>
      <task-bar></task-bar>`;
  }
}
